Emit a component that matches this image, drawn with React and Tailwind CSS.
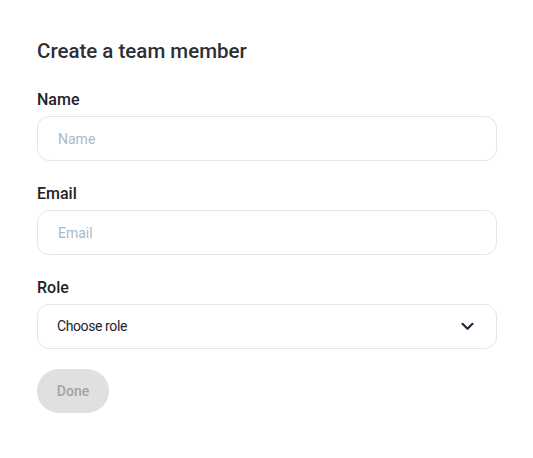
import React from "react";

function Field({ label, placeholder }) {
  return (
    <div className="flex flex-col mb-[21px]">
      <label className="text-[16px] leading-6 font-medium text-[#1f2328] mb-[4px]">{label}</label>
      <div className="h-[45px] rounded-[12px] border border-[#e3e5e8] flex items-center pl-[20px] pt-[2px] text-[14px] text-[#a9b9c9]">
        {placeholder}
      </div>
    </div>
  );
}

export default function App() {
  return (
    <div className="w-[533px] h-[458px] bg-white" style={{ fontFamily: "Roboto, sans-serif" }}>
      <div className="pt-[37px] pl-[37px] w-[497px] flex flex-col">
        <h1 className="text-[20.5px] leading-7 font-medium text-[#2b3035] mb-[23px]">Create a team member</h1>
        <div className="flex flex-col">
          <Field label="Name" placeholder="Name" />
          <Field label="Email" placeholder="Email" />
          <div className="flex flex-col mb-[20px]">
            <label className="text-[16px] leading-6 font-medium text-[#1f2328] mb-[4px]">Role</label>
            <div className="h-[45px] rounded-[12px] border border-[#e3e5e8] flex items-center justify-between pl-[19px] pr-[22px] text-[14px] tracking-[-0.4px] text-[#1c2330]">
              <span>Choose role</span>
              <svg width="13" height="9" viewBox="0 0 13 9" fill="none">
                <path d="M1.5 1.8 L6.5 6.8 L11.5 1.8" stroke="#1e2a3c" strokeWidth="2.2" strokeLinecap="round" strokeLinejoin="round" />
              </svg>
            </div>
          </div>
          <button className="w-[72px] h-[44px] rounded-full bg-[#e0e0e0] text-[#a3a3a3] text-[14px] font-medium">Done</button>
        </div>
      </div>
    </div>
  );
}
